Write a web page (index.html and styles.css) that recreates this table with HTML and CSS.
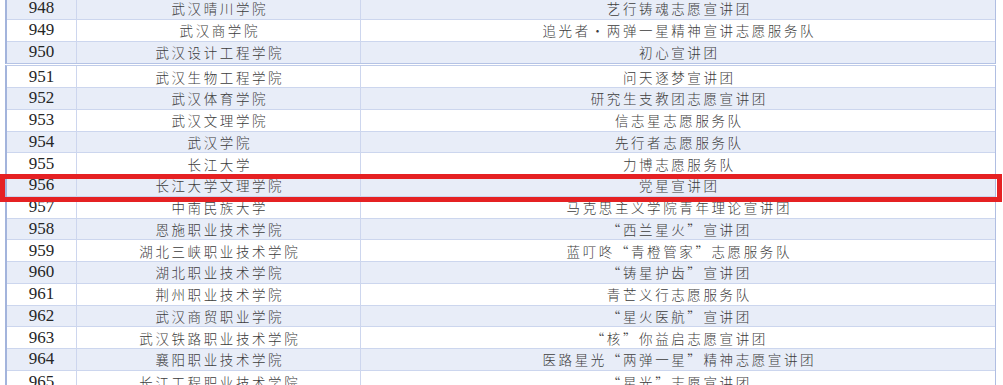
FILE: index.html
```html
<!DOCTYPE html>
<html lang="zh-CN">
<head>
<meta charset="utf-8">
<link rel="stylesheet" href="styles.css">
</head>
<body>
<div class="page">
  <div class="tbl">
    <div class="row alt"><div class="num">948</div><div class="cn">武汉晴川学院</div><div class="cn">艺行铸魂志愿宣讲团</div></div>
    <div class="row"><div class="num">949</div><div class="cn">武汉商学院</div><div class="cn">追光者·两弹一星精神宣讲志愿服务队</div></div>
    <div class="row alt"><div class="num">950</div><div class="cn">武汉设计工程学院</div><div class="cn">初心宣讲团</div></div>
  </div>
  <div class="tbl tbl2">
    <div class="row"><div class="num">951</div><div class="cn">武汉生物工程学院</div><div class="cn">问天逐梦宣讲团</div></div>
    <div class="row alt"><div class="num">952</div><div class="cn">武汉体育学院</div><div class="cn">研究生支教团志愿宣讲团</div></div>
    <div class="row"><div class="num">953</div><div class="cn">武汉文理学院</div><div class="cn">信志星志愿服务队</div></div>
    <div class="row alt"><div class="num">954</div><div class="cn">武汉学院</div><div class="cn">先行者志愿服务队</div></div>
    <div class="row"><div class="num">955</div><div class="cn">长江大学</div><div class="cn">力博志愿服务队</div></div>
    <div class="row alt"><div class="num">956</div><div class="cn">长江大学文理学院</div><div class="cn">党星宣讲团</div></div>
    <div class="row"><div class="num">957</div><div class="cn">中南民族大学</div><div class="cn">马克思主义学院青年理论宣讲团</div></div>
    <div class="row alt"><div class="num">958</div><div class="cn">恩施职业技术学院</div><div class="cn">“西兰星火”宣讲团</div></div>
    <div class="row"><div class="num">959</div><div class="cn">湖北三峡职业技术学院</div><div class="cn">蓝叮咚“青橙管家”志愿服务队</div></div>
    <div class="row alt"><div class="num">960</div><div class="cn">湖北职业技术学院</div><div class="cn">“铸星护齿”宣讲团</div></div>
    <div class="row"><div class="num">961</div><div class="cn">荆州职业技术学院</div><div class="cn">青芒义行志愿服务队</div></div>
    <div class="row alt"><div class="num">962</div><div class="cn">武汉商贸职业学院</div><div class="cn">“星火医航”宣讲团</div></div>
    <div class="row"><div class="num">963</div><div class="cn">武汉铁路职业技术学院</div><div class="cn">“核”你益启志愿宣讲团</div></div>
    <div class="row alt"><div class="num">964</div><div class="cn">襄阳职业技术学院</div><div class="cn">医路星光“两弹一星”精神志愿宣讲团</div></div>
    <div class="row"><div class="num">965</div><div class="cn">长江工程职业技术学院</div><div class="cn">“星光”志愿宣讲团</div></div>
  </div>
  <div class="mark"></div>
</div>
</body>
</html>
```

FILE: styles.css
```css
* { box-sizing: border-box; }
html, body { margin: 0; padding: 0; background: #ffffff; overflow: hidden; }
.page {
  position: relative;
  width: 1003px;
  height: 385px;
  overflow: hidden;
  padding-left: 5px;
}
.tbl {
  width: 991px;
  border-left: 2px solid #a3b4dc;
  border-right: 1px solid #b0bee2;
  border-bottom: 1px solid #b5c3e5;
}
.tbl:first-child { margin-top: -2px; }
.tbl2 {
  margin-top: 1px;
  border-top: 1px solid #c0cce9;
  border-bottom: none;
}
.row {
  display: grid;
  grid-template-columns: 70px 284px 1fr;
  height: 21.75px;
  border-bottom: 1px solid #ccd6ee;
  background: #ffffff;
}
.tbl .row:last-child { border-bottom: none; }
.row.alt { background: #e8edf8; }
.row > div {
  display: flex;
  align-items: center;
  justify-content: center;
  border-right: 1px solid #cdd6ee;
  color: #3c3c3c;
  white-space: nowrap;
}
.row > div:last-child { border-right: none; }
.num {
  font-family: "Liberation Serif", "Times New Roman", serif;
  font-size: 17px;
  color: #262626 !important;
}
.cn {
  font-family: "Noto Sans CJK SC", "Noto Sans", sans-serif;
  font-size: 13.5px;
  font-weight: 300;
  letter-spacing: 2.6px;
  padding-left: 2.6px;
}
.mark {
  position: absolute;
  left: 0;
  top: 174px;
  width: 1002px;
  height: 28px;
  border: 5px solid #e52123;
}
```
